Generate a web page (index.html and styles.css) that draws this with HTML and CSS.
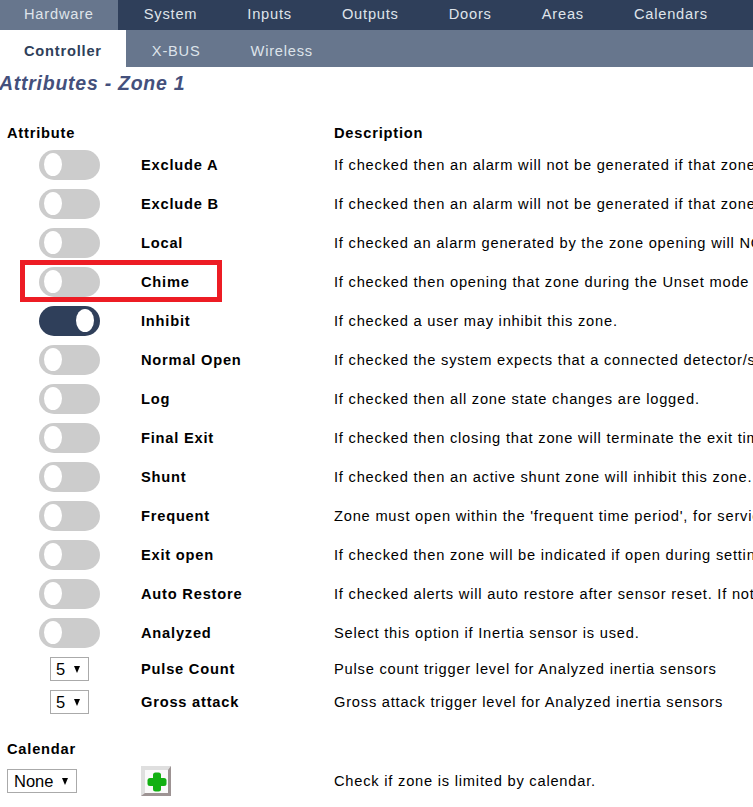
FILE: index.html
```html
<!DOCTYPE html>
<html lang="en">
<head>
    <meta charset="UTF-8">
    <meta name="viewport" content="width=device-width, initial-scale=1.0">
    <title>Attributes - Zone 1</title>
    <link rel="stylesheet" href="styles.css">
</head>
<body>
    <nav class="main-nav">
        <a class="active">Hardware</a>
        <a>System</a>
        <a>Inputs</a>
        <a>Outputs</a>
        <a>Doors</a>
        <a>Areas</a>
        <a>Calendars</a>
    </nav>
    <nav class="sub-nav">
        <a class="active">Controller</a>
        <a>X-BUS</a>
        <a>Wireless</a>
    </nav>
    <h1>Attributes - Zone 1</h1>

    <div class="attributes">
        <div class="row head">
            <span>Attribute</span>
            <span></span>
            <span>Description</span>
        </div>
        <div class="row">
            <span class="toggle"></span>
            <strong>Exclude A</strong>
            <span>If checked then an alarm will not be generated if that zone</span>
        </div>
        <div class="row">
            <span class="toggle"></span>
            <strong>Exclude B</strong>
            <span>If checked then an alarm will not be generated if that zone</span>
        </div>
        <div class="row">
            <span class="toggle"></span>
            <strong>Local</strong>
            <span>If checked an alarm generated by the zone opening will NOT</span>
        </div>
        <div class="row chime">
            <span class="toggle"></span>
            <strong>Chime</strong>
            <span>If checked then opening that zone during the Unset mode will</span>
        </div>
        <div class="row">
            <span class="toggle on"></span>
            <strong>Inhibit</strong>
            <span>If checked a user may inhibit this zone.</span>
        </div>
        <div class="row">
            <span class="toggle"></span>
            <strong>Normal Open</strong>
            <span>If checked the system expects that a connected detector/sensor</span>
        </div>
        <div class="row">
            <span class="toggle"></span>
            <strong>Log</strong>
            <span>If checked then all zone state changes are logged.</span>
        </div>
        <div class="row">
            <span class="toggle"></span>
            <strong>Final Exit</strong>
            <span>If checked then closing that zone will terminate the exit time</span>
        </div>
        <div class="row">
            <span class="toggle"></span>
            <strong>Shunt</strong>
            <span>If checked then an active shunt zone will inhibit this zone.</span>
        </div>
        <div class="row">
            <span class="toggle"></span>
            <strong>Frequent</strong>
            <span>Zone must open within the 'frequent time period', for service</span>
        </div>
        <div class="row">
            <span class="toggle"></span>
            <strong>Exit open</strong>
            <span>If checked then zone will be indicated if open during setting</span>
        </div>
        <div class="row">
            <span class="toggle"></span>
            <strong>Auto Restore</strong>
            <span>If checked alerts will auto restore after sensor reset. If not</span>
        </div>
        <div class="row">
            <span class="toggle"></span>
            <strong>Analyzed</strong>
            <span>Select this option if Inertia sensor is used.</span>
        </div>
        <div class="row small">
            <span class="select-wrap count"><select><option>5</option></select></span>
            <strong>Pulse Count</strong>
            <span>Pulse count trigger level for Analyzed inertia sensors</span>
        </div>
        <div class="row small">
            <span class="select-wrap count"><select><option>5</option></select></span>
            <strong>Gross attack</strong>
            <span>Gross attack trigger level for Analyzed inertia sensors</span>
        </div>
        <div class="row head calendar-head">
            <span>Calendar</span>
        </div>
        <div class="row calendar">
            <span class="select-wrap calendar-select"><select><option>None</option></select></span>
            <button class="add">
                <svg width="20" height="20" viewBox="0 0 20 20">
                    <rect x="6" y="0.5" width="8" height="19" rx="2.5" fill="#12b012"/>
                    <rect x="0.5" y="6" width="19" height="8" rx="2.5" fill="#12b012"/>
                </svg>
            </button>
            <span>Check if zone is limited by calendar.</span>
        </div>
    </div>
</body>
</html>
```

FILE: styles.css
```css
html, body { margin: 0; padding: 0; height: 100%; overflow: hidden; background: #fff; }
body { font-family: "Liberation Sans", Arial, sans-serif; font-size: 14.67px; letter-spacing: 0.78px; color: #000; }

.main-nav { display: flex; height: 30px; background: #2f3f5a; }
.main-nav a { padding: 0 25px; line-height: 28px; color: #dfe4ea; white-space: nowrap; }
.main-nav a.active { background: #67768d; padding: 0 24px; }
.main-nav a.active + a { padding-left: 26px; }

.sub-nav { display: flex; height: 37px; background: #67768d; }
.sub-nav a { padding: 0 25px; line-height: 42px; color: #dde3ea; white-space: nowrap; }
.sub-nav a.active { background: #fff; color: #2f3f5a; font-weight: bold; padding: 0 24px; }
.sub-nav a.active + a { padding-left: 26px; }

h1 { margin: 0 0 0 -1px; padding-top: 5px; height: 37px; font-size: 19.5px; line-height: 23px; letter-spacing: 0.74px; font-style: italic; font-weight: bold; color: #44507c; white-space: nowrap; }

.attributes { padding: 11px 0 0 7px; }
.row { position: relative; display: grid; grid-template-columns: 134px 193px 1fr; align-items: center; height: 39px; white-space: nowrap; }
.row > * { justify-self: start; }
.row.head { font-weight: bold; height: 25px; }
.row.small { height: 33px; }
.row.calendar-head { margin-top: 18px; }
.row.calendar { height: 30px; margin-top: 5px; }

.toggle { position: relative; display: block; width: 61px; height: 30px; margin-left: 32px; border-radius: 15px; background: #ccc; }
.toggle::after { content: ""; position: absolute; left: 5px; top: 3px; width: 18px; height: 23px; border-radius: 50%; background: #fff; }
.toggle.on { background: #2f3f5a; }
.toggle.on::after { left: 37px; }

.chime::after { content: ""; position: absolute; left: 13px; top: -2px; width: 192px; height: 32px; border: 5px solid #ed1c24; }

.select-wrap { position: relative; display: block; height: 24px; }
.select-wrap::after { content: ""; position: absolute; right: 9px; top: 9px; border-style: solid; border-width: 7px 3.5px 0; border-color: #000 transparent transparent; pointer-events: none; }
.select-wrap select { appearance: none; display: block; width: 100%; height: 24px; padding: 0 0 0 5px; font-family: "Liberation Sans", Arial, sans-serif; font-size: 16.5px; letter-spacing: 0; color: #000; background: #fff; border: 1px solid #aaa; border-radius: 0; }
.count { width: 39px; margin-left: 43px; }
.calendar-select { width: 70px; }
.calendar-select select { padding-left: 6px; }

.add { display: flex; align-items: center; justify-content: center; width: 30px; height: 30px; padding: 0; background: #fafafa; border-style: solid; border-width: 4px 3px 3px 4px; border-color: #dfdfdf #9d9393 #9d9393 #dfdfdf; }
```
